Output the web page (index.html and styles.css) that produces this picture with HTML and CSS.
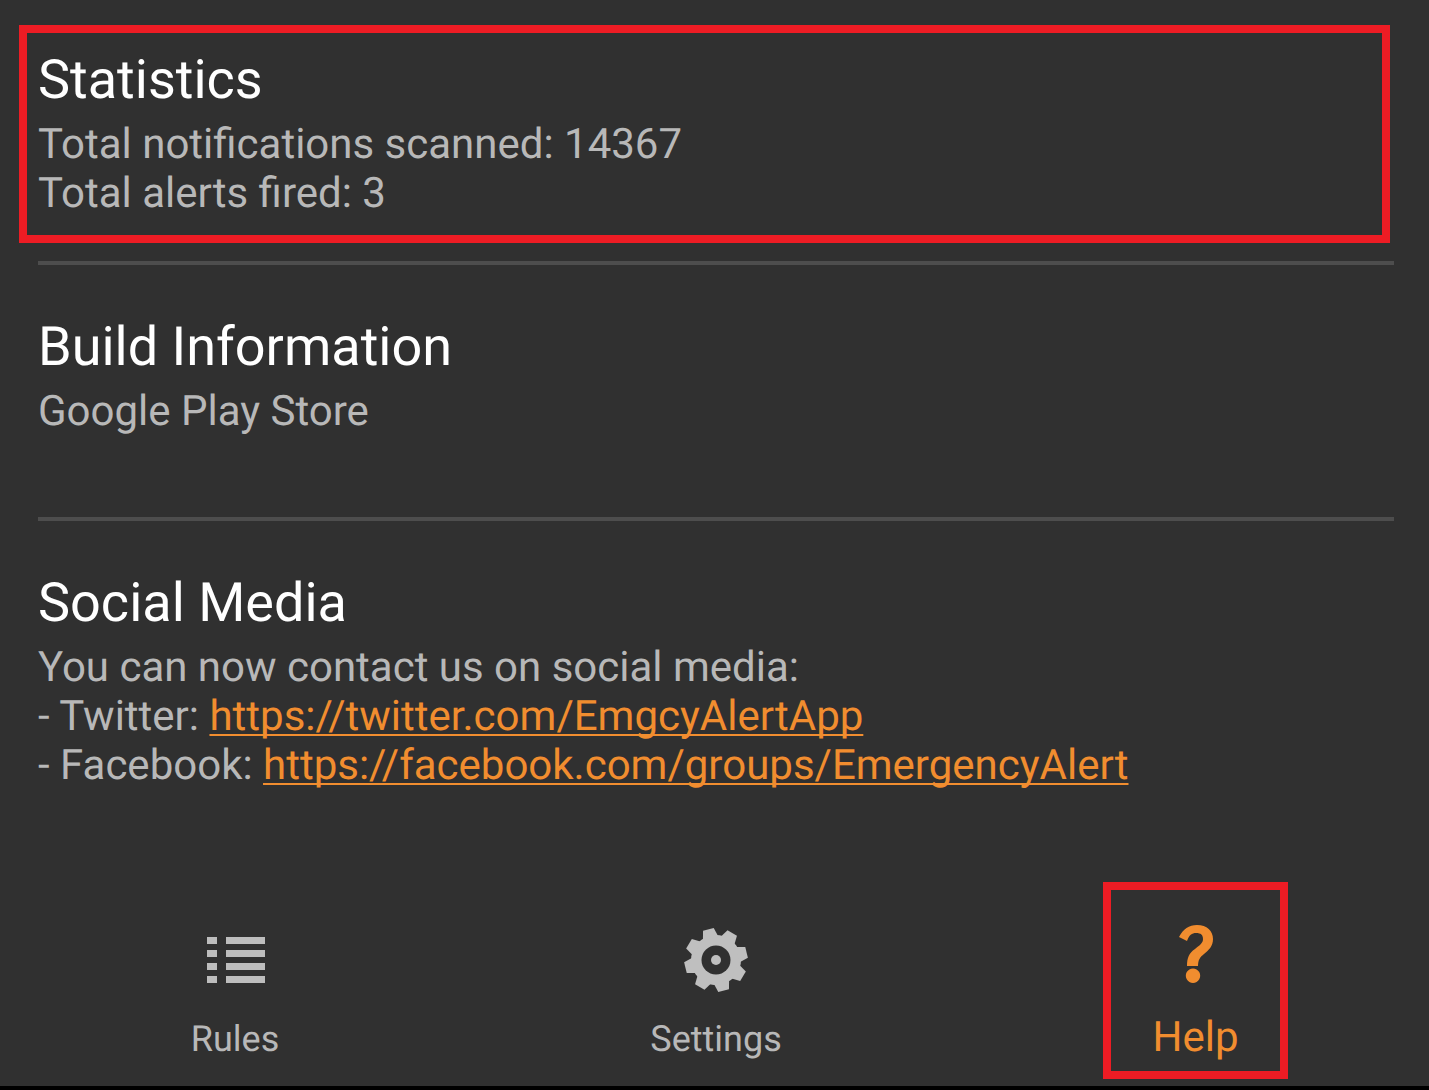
FILE: index.html
```html
<!DOCTYPE html>
<html lang="en">
<head>
<meta charset="utf-8">
<title>Help</title>
<link rel="stylesheet" href="styles.css">
</head>
<body>
<div class="screen">
  <main class="content">
    <section class="block">
      <h2 class="title">Statistics</h2>
      <p class="text">Total notifications scanned: 14367<br>Total alerts fired: 3</p>
    </section>
    <hr class="rule">
    <section class="block block-build">
      <h2 class="title">Build Information</h2>
      <p class="text">Google Play Store</p>
    </section>
    <hr class="rule">
    <section class="block">
      <h2 class="title">Social Media</h2>
      <p class="text">You can now contact us on social media:<br>- Twitter: <a class="link" href="#">https://twitter.com/EmgcyAlertApp</a><br>- Facebook: <a class="link" href="#">https://facebook.com/groups/EmergencyAlert</a></p>
    </section>
  </main>
  <nav class="tabs">
    <div class="tab">
      <div class="slot">
        <svg class="icon icon-rules" viewBox="0 0 58 46" width="58" height="46"><path fill="#bdbdbd" d="M0 0h10v7H0zM19 0h39v7H19zM0 13h10v7H0zM19 13h39v7H19zM0 26h10v7H0zM19 26h39v7H19zM0 39h10v7H0zM19 39h39v7H19z"/></svg>
      </div>
      <span class="tab-label">Rules</span>
    </div>
    <div class="tab">
      <div class="slot">
        <svg class="icon icon-gear" viewBox="0 0 64 64" width="64" height="64">
          <g class="gear-fill" transform="rotate(-14 32 32)">
            <circle cx="32" cy="32" r="25"/>
            <polygon points="24,10 26.500,0.500 37.500,0.500 40,10"/>
            <polygon points="24,10 26.500,0.500 37.500,0.500 40,10" transform="rotate(45 32 32)"/>
            <polygon points="24,10 26.500,0.500 37.500,0.500 40,10" transform="rotate(90 32 32)"/>
            <polygon points="24,10 26.500,0.500 37.500,0.500 40,10" transform="rotate(135 32 32)"/>
            <polygon points="24,10 26.500,0.500 37.500,0.500 40,10" transform="rotate(180 32 32)"/>
            <polygon points="24,10 26.500,0.500 37.500,0.500 40,10" transform="rotate(225 32 32)"/>
            <polygon points="24,10 26.500,0.500 37.500,0.500 40,10" transform="rotate(270 32 32)"/>
            <polygon points="24,10 26.500,0.500 37.500,0.500 40,10" transform="rotate(315 32 32)"/>
          </g>
          <circle class="gear-hole" cx="32" cy="32" r="14.500"/>
          <circle class="gear-fill" cx="32" cy="32" r="5"/>
        </svg>
      </div>
      <span class="tab-label tab-label-nudge">Settings</span>
    </div>
    <div class="tab tab-active">
      <div class="slot">
        <svg class="icon icon-help" viewBox="0 0 34 58" width="34" height="58"><path fill="#f18d2f" d="M0 12C4 4 10 0 18 0C28 0 34 6 34 14C34 21 30 25 25 29C21 32 19 35 19 41H8C8 33 10 28 16 24C21 20 24 18 24 14C24 10 22 8 17 8C13 8 10 10 8 16ZM14 43.500a7.200 7.200 0 1 1-.01 0z"/></svg>
      </div>
      <span class="tab-label">Help</span>
    </div>
  </nav>
  <div class="edge"></div>
  <div class="mark mark-stats"></div>
  <div class="mark mark-help"></div>
</div>
</body>
</html>
```
FILE: styles.css
```css
* { box-sizing: border-box; }
html, body { margin: 0; padding: 0; }
body { background: #303030; font-family: Roboto, "Noto Sans", sans-serif; text-rendering: geometricPrecision; }
.screen { position: relative; width: 1429px; height: 1090px; overflow: hidden; display: flex; flex-direction: column; background: #303030; }
.content { flex: 1; padding: 49px 35px 0 38px; }
.title { margin: 0; font-size: 54px; line-height: 63px; font-weight: 400; color: #fff; }
.text { margin: 8px 0 0; font-size: 42px; line-height: 49px; color: #b8b8b8; }
.link { color: #f18d2f; text-decoration: underline; text-decoration-thickness: 2px; text-underline-offset: 4px; text-decoration-skip-ink: none; }
.rule { height: 4px; margin: 43px 0 0; border: 0; background: #4d4d4d; }
.rule + .block { padding-top: 51px; }
.block-build { height: 209px; }
.tabs { display: grid; grid-template-columns: repeat(3, 480px); margin-left: -5px; height: 176px; }
.tab { display: flex; flex-direction: column; align-items: center; padding-top: 18px; }
.slot { display: flex; align-items: center; justify-content: center; height: 64px; }
.icon { display: block; }
.icon-rules { margin-left: 2px; }
.icon-gear { margin-left: 2px; }
.icon-help { margin: -12px 0 0 2px; }
.gear-fill { fill: #bfbfbf; }
.gear-hole { fill: #303030; }
.tab-label { margin-top: 26px; font-size: 36px; line-height: 42px; color: #b8b8b8; }
.tab-label-nudge { margin-left: 2px; }
.tab-active .tab-label { margin: 25px 0 0 1px; color: #f18d2f; font-size: 42px; }
.edge { height: 4px; background: #000; }
.mark { position: absolute; border: 8px solid #ed1c24; }
.mark-stats { left: 19px; top: 25px; width: 1371px; height: 218px; }
.mark-help { left: 1103px; top: 882px; width: 185px; height: 197px; }
```
